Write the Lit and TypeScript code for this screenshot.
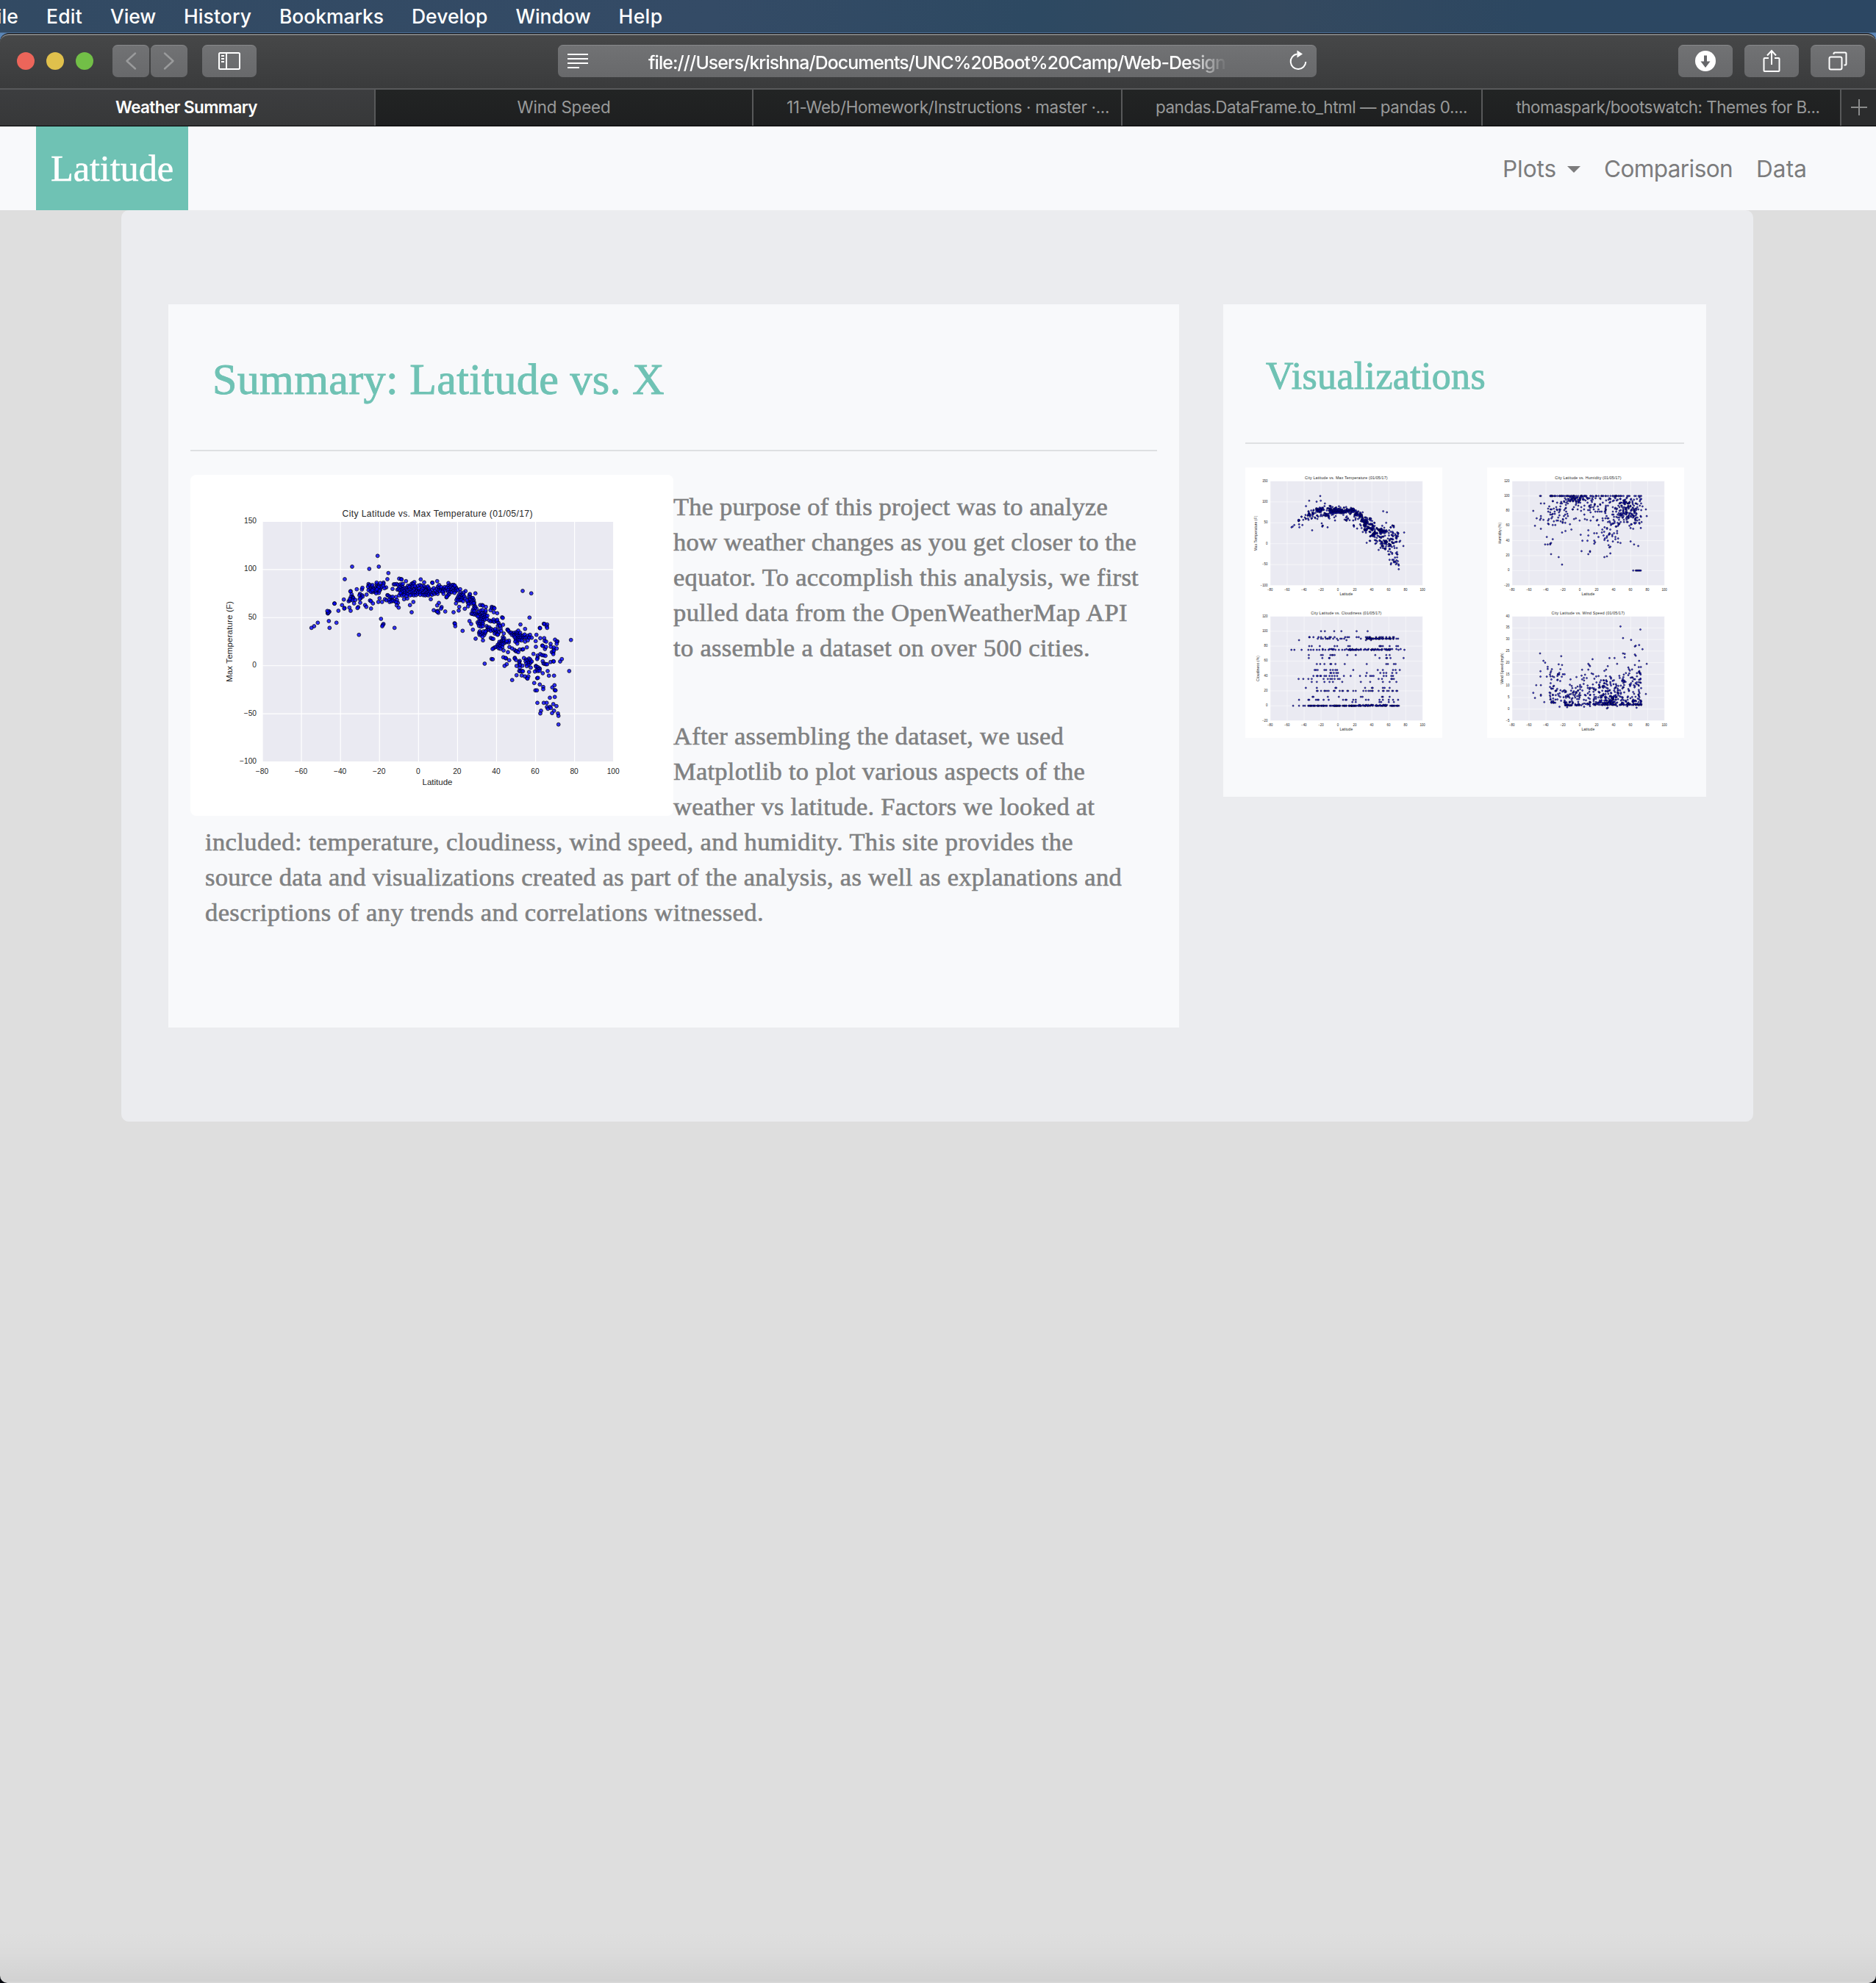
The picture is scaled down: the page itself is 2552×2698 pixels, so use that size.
import { LitElement, html, svg, css } from "lit";
import { customElement, property } from "lit/decorators.js";

/** One line of text whose tracking is adjusted so that it fills a given width. */
@customElement("fit-text")
class FitText extends LitElement {
  @property() text = "";
  @property({ type: Number }) w = 0;
  static styles = css`
    :host { display: inline-block; white-space: pre; flex: none; }
  `;
  render() {
    return html`<span>${this.text}</span>`;
  }
  updated() {
    const span = this.renderRoot.querySelector("span") as HTMLElement;
    span.style.letterSpacing = "0px";
    const natural = span.getBoundingClientRect().width;
    if (this.w && natural) span.style.letterSpacing = (this.w - natural) / this.text.length + "px";
  }
}

type Pt = [number, number];

/* Plot frame inside a figure, in figure units */
const FX = 98, FY = 63.3, FW = 477.7, FH = 327.4;

/* Latitude / temperature samples, in thirds of a figure unit */
const TEMP_RAW = `341,49 237,93 307,102 346,93 385,119 207,144 381,144 165,243 165,244 137,282 142,275 144,277 138,284 140,280 136,274 181,273 142,315 173,322 97,322 82,336 71,343 145,343 265,371 355,306 365,327 362,331 360,336 410,343
196,250 206,262 205,264 226,260 231,273 203,227 223,234 228,231 231,193 230,194 235,206 238,215 232,217 240,219 236,225 242,222 239,230 228,225 245,243 250,229 256,185 277,186 279,179 269,204 267,210 278,210 280,215 272,221 268,225 262,258 259,262 270,240 290,250 295,257 310,231 314,234 322,243 314,264 296,207
304,164 305,170 302,175 310,168 318,173 320,168 323,180 310,185 304,189 316,187 326,190 330,185 335,178 337,165 337,158 340,172 344,175 348,170 343,183 350,180 356,176 352,186 344,189 339,195 329,196 318,197 346,200 335,202 313,195 325,185 333,190 320,190 349,191 345,177 338,185
365,158 365,163 364,171 376,178 369,181 352,160 349,222 344,237 359,237 371,226 377,230 381,209 384,211 390,215 396,218 402,216 401,229 396,231 388,229 390,237 398,235 405,232 412,235 416,217 420,229 424,241 419,251 427,260 417,238 402,184 407,165 412,165 419,164 425,168 422,187
429,142 437,144 439,145 457,152 434,165 440,168 444,163 443,176 436,180 430,178 427,185 433,190 440,186 446,185 452,181 460,179 457,187 462,190 455,196 448,193 440,196 435,204 444,205 452,202 460,203 466,205 429,210 441,211 434,200 450,209 449,226 462,223 459,213 465,171
474,170 480,163 485,160 491,156 488,165 482,174 476,180 470,176 472,186 478,190 474,198 481,196 487,190 492,184 497,178 493,172 502,187 500,194 494,200 486,203 480,208 474,210 489,210 498,209 505,203 508,196 513,189 509,181 506,171 473,250 487,237 480,279
517,145 531,157 514,168 521,171 530,173 536,178 531,185 524,183 519,190 516,198 522,204 529,199 535,192 541,187 548,186 545,178 546,174 551,182 553,191 547,197 541,201 535,205 528,209 536,210 543,208 548,210 552,203 557,196 560,205 564,187 570,181 564,158 565,159 584,152 558,226 515,208
563,208 570,200 574,204 580,198 586,204 584,196 577,190 583,183 587,175 592,168 593,180 598,185 591,190 596,193 602,188 607,182 600,176 609,189 612,183 615,176 617,190 622,182 607,196 610,204 622,218
630,160 636,168 629,172 624,178 633,179 640,174 645,168 651,167 654,174 648,181 641,187 635,190 628,189 630,198 638,197 632,206 627,211 644,197 652,191 658,186 661,178 664,184 660,193 655,200 668,189 678,185 656,170 623,216
700,193 740,202 692,199 679,199 684,206 674,207 680,211 686,213 691,208 670,215 676,219 682,222 688,221 666,223 663,229 670,231 678,230 684,229 690,234 695,215 699,223 716,208 718,205 714,216 720,218 725,221 730,221 733,229 735,239 728,232 722,229 716,228 711,235 717,239 724,238 709,238 736,249 706,230 721,244 733,242 712,245 661,243 674,257 672,272 697,265 651,279 710,255
591,241 584,251 602,258 600,264 570,271 582,275 587,274 589,281 617,276 585,277 655,324 657,326 658,336 688,355
735,256 740,257 745,265 738,264 731,268 729,274 736,275 724,285 729,286 735,288 741,284 748,283 745,291 752,289 757,285 754,277 762,272 769,270 767,283 774,284 781,278 759,292 766,295 773,292 779,290 784,295 778,301 771,303 763,301 756,300 750,296 757,308 764,309 772,311 779,309 787,306 749,320 756,317 763,318 770,320 752,326 758,328 765,330 771,327 755,335 763,338 770,336 760,250 768,250 771,252 783,257 782,272 802,271 807,257 808,262 815,260 818,263 815,279 829,283 789,293 797,313 803,316 811,315 814,309 817,318 826,315 830,318 829,310 835,323 832,335 838,331 843,343 841,335 853,330 849,300 852,302
716,315 723,327 730,350 741,387 755,363 758,357 762,364 757,371 764,371 770,366 776,372 780,364 773,357 769,379 771,394 786,336 791,341 797,341 791,350 785,354 781,358 797,350 804,347 803,355 812,352 818,358 824,355 829,352 825,362 819,366 828,369 833,368 837,359 845,355 821,348 803,384 808,387 813,388 831,371
856,366 852,381 857,385 853,390 848,395 855,397 845,400 838,400 842,406 850,405 858,405 866,401 876,402 877,395 868,397 836,408 844,411 851,411 831,412 835,418 843,418 850,421 827,420 820,422 814,426 810,429 835,426 842,428 855,435 873,442
871,350 873,351 876,356 882,363 887,362 889,371 894,366 899,363 900,371 906,368 908,360 915,354 913,365 919,368 923,363 897,375 904,376 911,375 917,377 925,374 930,378 936,374 941,370 936,383 928,386 921,384 914,386 907,385 901,382 905,391 913,392 921,393 929,394 909,399 903,399 911,407 943,383 949,381 954,375 961,380 963,371 959,384 970,383 943,399 954,394 943,347 924,329 961,301 933,192 968,202
879,421 890,427 900,433 905,438 909,438 915,442 921,431 932,431 935,430 950,422 977,449 987,420 986,397 989,371
901,465 901,468 906,474 921,478 919,483 920,489 938,466 947,472 945,479 953,475 959,468 964,472 961,480 966,483 970,480 962,488 955,486 948,489 956,494 932,497 922,494 908,498 921,506 950,499 966,505 854,463 865,467 863,466 878,475 868,491 859,498 778,489 806,470 811,471 919,519 924,520 931,519 934,520 929,537 908,536 959,523 942,541 951,548 956,541 953,550 890,556
1005,385 1021,385 1023,396 1029,399 1013,415 1015,416 1024,429 1028,421 1047,408 1048,420 1060,429 1060,423 1065,391 1075,398 1072,399 1072,408 1072,427 1052,442 1058,443 1060,436 1058,450 1130,392 1003,343 1004,344 1019,326 1022,327 1033,329 1031,337 1033,343
994,456 1005,450 1012,454 1019,455 1026,457 994,465 992,470 1015,479 1018,488 1023,490 1028,491 1033,491 1047,482 1058,479 1060,480 1086,480 1093,470 1123,519
987,498 988,501 995,503 1001,508 1003,510 996,511 990,515 983,521 995,519 1002,518 1015,528 1035,519 1040,538 1061,538 992,548 995,547 980,568 1003,574 1017,584 1017,593 985,598 991,598 1054,586 1063,577 1064,597 1067,598 1044,628 1064,625 993,649 1019,649 1031,649 1058,654 1032,666 1036,673 1045,665 1048,670 1071,662 1061,681 1053,691 1008,681 1005,692 1077,692 1079,702 1079,737`;

const TEMP: Pt[] = TEMP_RAW.trim().split(/\s+/).map((p) => {
  const [x, y] = p.split(",").map(Number);
  return [141 + x / 3, 94 + y / 3] as Pt;
});

function rng(seed: number) {
  return () => {
    seed = (seed * 1664525 + 1013904223) >>> 0;
    return seed / 4294967296;
  };
}

function place(lat: number, v: number, lo: number, hi: number): Pt {
  return [FX + ((lat + 80) / 180) * FW, FY + FH - ((v - lo) / (hi - lo)) * FH];
}

function humidity(): Pt[] {
  const r = rng(11);
  const d: Pt[] = [[-55,80],[-53,60],[-51,70],[-46,100],[-47,100],[-46,90],[-42,90],[-47,68],[-46,73],[-46,70],[-43,68],[-46,56],[-39,45],[-41,35],[-38,35],[-35,36],[-34,37],[-35,35],[-32,42],[-34,22],[-25,18],[-21,8],[-32,61],[-29,61],[-21,51],[-17,53],[-10,55],[1,48],[3,40],[2,26],[10,22],[12,26],[12,25],[9,40],[10,54],[10,47],[17,50],[17,40],[18,38],[17,36],[20,50],[22,45],[29,18],[32,19],[35,31],[36,32],[36,23],[34,34],[33,40],[28,47],[29,41],[39,39],[42,42],[42,45],[44,50],[45,38],[48,37],[44,53],[60,39],[64,35],[69,33],[60,57],[63,56],[72,57],[78,82],[79,73],[74,86],[63,0],[66,0],[67,0],[68,0],[69,0],[70,0],[71,0],[72,0]];
  for (let i = 0; i < 82; i++) d.push([-38 + r() * 111, 100]);
  for (let i = 0; i < 40; i++) d.push([-20 + r() * 22, 92 + r() * 8]);
  for (let i = 0; i < 52; i++) d.push([-38 + r() * 22, 62 + r() * 31]);
  for (let i = 0; i < 64; i++) d.push([-15 + r() * 35, 60 + Math.sqrt(r()) * 39]);
  for (let i = 0; i < 150; i++) d.push([20 + r() * 53, 60 + r() * 38]);
  for (let i = 0; i < 75; i++) d.push([46 + r() * 21, 67 + r() * 27]);
  for (let i = 0; i < 24; i++) d.push([26 + r() * 20, 42 + r() * 25]);
  return d.map(([a, b]) => place(a, Math.round(b), -20, 120));
}

function cloudiness(): Pt[] {
  const r = rng(5);
  const d: Pt[] = [];
  const row = (v: number, lats: number[]) => lats.forEach((l) => d.push([l, v]));
  row(100, [-20, -15.5, -4.5, 4, 22, 35]);
  row(92, [-34, -33.5, -29, -23, -20, -15, -10, -8.5, -4, 8.5, 11, 13, 22, 24.5, 33, 35, 37, 38, 45, 49, 51, 53, 57, 61, 65, 66]);
  row(88, [-46, 0, 10, 33, 39]);
  row(80, [-34, -31, -21.5, -4, -1, 12, 14, 49, 50, 51, 53, 61, 69, 71]);
  row(75, [-55, -51.5, -43, -35, -32, -29, -25, -22, -18, -15, -11, -6, -3, 1, 5, 8, 71.5, 78.5]);
  row(76, [-18, -10, -8, -7, -5, 10, 14, 17, 22, 27, 32, 36, 41, 44, 47, 52, 55, 57, 60, 62, 64, 69, 74]);
  row(68, [-34.5, -20, -18, -9, -7, -6, -4, 11, 21, 44, 57, 61]);
  row(64, [-34.5, -18.5, -10.5, -10, 49, 57, 58, 62, 77.5]);
  row(56, [-25, -21, -16, -9, -8, -3, 8, 34, 57, 59, 66, 68]);
  row(48, [-27.5, -26, -24, -16, -14, -9, -6, -3, -1, 18, 47, 53, 65, 68, 73]);
  row(44, [-9, -8, -5, -2, 0, 34, 50, 54, 57, 64, 69]);
  row(40, [-29, -25, -24, -21, -20, -16, -14, -10, -7, -4, -1, 7, 15, 26, 33, 38, 40, 42, 54, 57, 63, 65]);
  row(36, [-46.5, -41, -35, -31, -17, -12, -9, -7, -4, 0, 2, 48, 52, 63, 64, 66]);
  row(32, [-31, -25, -16, -10, -6, 5, 27, 38, 53, 61, 69]);
  row(24, [-38, -25, -3, -2, 32, 40, 41, 53, 55, 61]);
  row(20, [-25, -24, -20, -16, -15, -13, -11, -5, -4, 2, 5, 6, 11, 12, 18, 21, 30, 33, 36, 38, 40, 41, 48, 53, 54, 58, 60, 64, 65, 69, 70]);
  row(12, [-30, -29, -12, 1, 27, 29, 52, 53, 61]);
  row(8, [-46, -35, -34, -26, -24, -23, -17, -11, 6, 9, 10, 18, 21, 33, 36, 49, 53, 60, 65, 71]);
  row(5, [17, 21, 49, 51, 60, 66]);
  row(0, [-53, -46, -41, -39, -35, -33, -28, -24, -20, -17, -13, -9]);
  for (let i = 0; i < 48; i++) row(90, [32 + r() * 34]);
  for (let i = 0; i < 12; i++) row(90, [-24 + r() * 40]);
  row(90, [71, 69, 27]);
  for (let i = 0; i < 38; i++) row(75, [10 + r() * 52]);
  for (let i = 0; i < 34; i++) row(0, [-40 + r() * 60]);
  for (let i = 0; i < 80; i++) row(0, [-5 + r() * 78]);
  for (let i = 0; i < 18; i++) row(1, [20 + r() * 40]);
  return d.map(([a, b]) => place(a, b, -20, 120));
}

function wind(): Pt[] {
  const r = rng(23);
  const d: Pt[] = [[48,35.6],[71.5,34.3],[51,30.6],[60.5,29.8],[70,27.6],[65,27],[66,27.3],[74,25.8],[-47,24],[51,24],[53,23.8],[53,22.3],[65,23.5],[66,23],[-22,22.8],[-43,20.8],[-41,20],[15,21.5],[35,22],[41,22],[70,20.8],[79,19.5],[78,6.5],[-55,7],[-53,4.8],[-51.5,10.3],[-46,10.3],[-46,6.2],[-46,5.8],[-46.5,14],[-46.5,16.3],[-38,18.2],[-38,17.3],[-25,19.3],[-21,19],[-33,17.2],[-23,17.2],[10,19.5],[11,19],[12,18.5],[33,18.5],[44,19.5],[31,17],[10,17],[29,16.5],[65,19],[58,17.2],[-42,3],[-34,16.3],[-39,14],[-20,15],[-18,15],[-11,12.8],[-4,13.8]];
  const low = (lo: number, hi: number, n: number, base: number, spread: number) => {
    for (let i = 0; i < n; i++) d.push([lo + r() * (hi - lo), base + Math.pow(r(), 2) * spread]);
  };
  low(-36, -18, 58, 2.7, 14);
  low(-18, 2, 85, 1.6, 9);
  low(2, 18, 42, 2, 15);
  low(16, 45, 165, 1.8, 12.5);
  low(45, 73, 160, 1.8, 16.5);
  low(26, 45, 40, 2.5, 3.5);
  [[-24,1],[-15,0.8],[32,0.3],[33,0.6],[67,0.6],[5,1],[12,1.3],[56,1.2],[44,1.3]].forEach((p) => d.push(p as Pt));
  return d.map(([a, b]) => place(a, b, -5, 40));
}

interface PlotSpec { title: string; tw: number; label: string; lw: number; lx: number; lo: number; hi: number; step: number; pts: Pt[]; }

const PLOTS: Record<string, PlotSpec> = {
  temp: { title: "City Latitude vs. Max Temperature (01/05/17)", tw: 259, label: "Max Temperature (F)", lw: 110, lx: 57, lo: -100, hi: 150, step: 50, pts: TEMP },
  humidity: { title: "City Latitude vs. Humidity (01/05/17)", tw: 208, label: "Humidity (%)", lw: 68, lx: 63.5, lo: -20, hi: 120, step: 20, pts: humidity() },
  cloud: { title: "City Latitude vs. Cloudiness (01/05/17)", tw: 221, label: "Cloudiness (%)", lw: 80, lx: 63.5, lo: -20, hi: 120, step: 20, pts: cloudiness() },
  wind: { title: "City Latitude vs. Wind Speed (01/05/17)", tw: 229, label: "Wind Speed (mph)", lw: 98, lx: 69.5, lo: -5, hi: 40, step: 5, pts: wind() },
};

@customElement("scatter-plot")
class ScatterPlot extends LitElement {
  @property() kind = "temp";
  @property() box = "0 0 657 464";
  @property({ type: Boolean, reflect: true }) small = false;
  static styles = css`
    :host { display: block; background: #fff; overflow: hidden; }
    svg { display: block; width: 100%; height: 100%; font-family: "Liberation Sans", Arial, sans-serif; fill: #262626; }
    .area { fill: #eaeaf2; }
    .grid { stroke: #fff; stroke-width: 1.2; }
    .dot { fill: #0000ff; fill-opacity: 0.8; stroke: #000; stroke-opacity: 0.8; stroke-width: 0.9; }
    :host([small]) .dot { stroke-width: 1.5; stroke-opacity: 0.75; }
    .tick { font-size: 10.2px; }
    .title { font-size: 12.2px; }
    .label { font-size: 11.5px; }
  `;
  render() {
    const p = PLOTS[this.kind];
    const xs: number[] = [], ys: number[] = [];
    for (let x = -80; x <= 100; x += 20) xs.push(x);
    for (let y = p.lo; y <= p.hi; y += p.step) ys.push(y);
    const fmt = (n: number) => String(n).replace("-", "−");
    const cx = FX + FW / 2, cy = FY + FH / 2;
    return html`<svg viewBox=${this.box} preserveAspectRatio="none">
      <rect class="area" x=${FX} y=${FY} width=${FW} height=${FH}></rect>
      ${xs.map((v) => {
        const [x] = place(v, 0, 0, 1);
        return svg`<line class="grid" x1=${x} x2=${x} y1=${FY} y2=${FY + FH}></line>
          <text class="tick" x=${x - 0.5} y=${FY + FH + 16} text-anchor="middle">${fmt(v)}</text>`;
      })}
      ${ys.map((v) => {
        const [, y] = place(0, v, p.lo, p.hi);
        return svg`<line class="grid" x1=${FX} x2=${FX + FW} y1=${y} y2=${y}></line>
          <text class="tick" x=${FX - 8} y=${y + 2.6} text-anchor="end">${fmt(v)}</text>`;
      })}
      ${p.pts.map(([x, y]) => svg`<circle class="dot" cx=${x.toFixed(1)} cy=${y.toFixed(1)} r="2.45"></circle>`)}
      <text class="title" x=${cx - p.tw / 2 - 0.8} y=${FY - 6} textLength=${p.tw}>${p.title}</text>
      <text class="label" x=${cx - 0.8} y=${FY + FH + 31.5} text-anchor="middle">Latitude</text>
      <text class="label" x=${-p.lw / 2} y="0" textLength=${p.lw} transform="translate(${p.lx} ${cy}) rotate(-90)">${p.label}</text>
    </svg>`;
  }
}

@customElement("browser-chrome")
class BrowserChrome extends LitElement {
  static styles = css`
    :host { display: block; font-family: Inter, "Liberation Sans", sans-serif; color: #fff; background: #5b86b8; }
    .menubar { height: 45px; box-sizing: border-box; border-bottom: 1px solid #4d6f96; display: flex; gap: 38px; padding-top: 6px;
      background: linear-gradient(90deg, #324a63 0%, #344b66 38%, #2d4962 55%, #34495f 68%, #2c4761 82%, #2c4763 100%);
      font-size: 26.5px; line-height: 32px; font-weight: 500; overflow: hidden; }
    .menubar fit-text:first-child { margin-left: -20px; }
    .window { border-top: 1px solid #0b0e14; border-radius: 12px 12px 0 0; overflow: hidden; background: #3c3d3e; }
    .toolbar { height: 76px; box-sizing: border-box; border-top: 2px solid #7c7d7e; border-bottom: 2px solid #58595b;
      background: linear-gradient(#464748, #3a3b3c); display: flex; align-items: center; padding: 0 15px 2px 23px; border-radius: 12px 12px 0 0; }
    .light { width: 24px; height: 24px; border-radius: 50%; margin-right: 16px; }
    .red { background: #ec655a; } .yellow { background: #e0c04c; } .green { background: #72bf47; margin-right: 26px; }
    .btn { height: 44px; box-sizing: border-box; border-radius: 7px; border-top: 1px solid #88898b; background: linear-gradient(#717274, #68696b); display: flex; align-items: center; justify-content: center; }
    .btn svg { display: block; fill: none; stroke: #fff; stroke-width: 2; margin-top: -1px; }
    .arrow { width: 50px; margin-right: 2px; }
    .btn.arrow svg { stroke: #9a9b9c; stroke-width: 2.4; stroke-linecap: round; stroke-linejoin: round; }
    .wide { width: 74px; }
    .side { margin-left: 18px; }
    .address { width: 1032px; margin-left: 410px; margin-right: auto; justify-content: flex-start; padding: 0 12px 0 13px; }
    .url { font-size: 24.8px; font-weight: 500; line-height: 30px; margin-left: 82px; margin-right: auto; padding-top: 3px;
      -webkit-mask-image: linear-gradient(90deg, #000 93.5%, rgba(0,0,0,0.05)); mask-image: linear-gradient(90deg, #000 93.5%, rgba(0,0,0,0.05)); }
    .actions { display: flex; gap: 16px; }
    .tabs { display: grid; grid-template-columns: 509px 514px 502px 490px 488px 1fr; height: 50px; box-sizing: border-box; border-bottom: 1px solid #000; }
    .tab { display: flex; align-items: center; justify-content: center; background: linear-gradient(#222424, #1e1f20); color: #999a9a; border-left: 2px solid #58595a;
      box-sizing: border-box; font-size: 22.4px; line-height: 28px; padding-bottom: 1px; }
    .active { background: linear-gradient(#3c3d3f, #373839); color: #fff; font-weight: 600; border-left: 0; padding-right: 2px; }
    .o3 { padding-left: 29px; } .o4 { padding-left: 26px; } .o5 { padding-left: 18px; }
    .plus { background: #2b2c2d; }
    .plus svg { fill: none; stroke: #8a8b8b; stroke-width: 2; }
  `;
  render() {
    const menu: [string, number][] = [["File", 45], ["Edit", 49], ["View", 62], ["History", 92], ["Bookmarks", 142], ["Develop", 103.5], ["Window", 102], ["Help", 60]];
    return html`
      <div class="menubar">${menu.map(([t, w]) => html`<fit-text .text=${t} .w=${w}></fit-text>`)}</div>
      <div class="window">
        <div class="toolbar">
          <div class="light red"></div><div class="light yellow"></div><div class="light green"></div>
          <div class="btn arrow"><svg width="16" height="26"><path d="M14 2.5 2.5 13 14 23.5"></path></svg></div>
          <div class="btn arrow"><svg width="16" height="26"><path d="M2 2.5 13.5 13 2 23.5"></path></svg></div>
          <div class="btn wide side">
            <svg width="30" height="24"><rect x="1" y="1" width="28" height="22" rx="1.5"></rect><path d="M11 1v22M4 5h4M4 9h4M4 13h4"></path></svg>
          </div>
          <div class="btn address">
            <svg width="28" height="22"><path d="M0 2h28M0 8h28M0 14h28M0 20h16"></path></svg>
            <fit-text class="url" .text=${"file:///Users/krishna/Documents/UNC%20Boot%20Camp/Web-Design"} .w=${785}></fit-text>
            <svg width="26" height="30" viewBox="0 0 26 30"><path d="M11.5 5.5A10.3 10.3 0 1 0 23.3 16"></path><path d="M11.5 0.5v10l7.5-5z" fill="#fff" stroke="none"></path></svg>
          </div>
          <div class="actions">
            <div class="btn wide"><svg width="28" height="28"><circle cx="14" cy="14" r="14" fill="#fff" stroke="none"></circle><path d="M12 6.5h4v8h4.5L14 23 7.5 14.5h4.5z" fill="#66676a" stroke="none"></path></svg></div>
            <div class="btn wide"><svg width="24" height="32" viewBox="0 0 24 32"><path d="M8 12H2.5a1 1 0 0 0-1 1v16a1 1 0 0 0 1 1h19a1 1 0 0 0 1-1V13a1 1 0 0 0-1-1H16M12 21V2M6 8.5 12 2l6 6.5"></path></svg></div>
            <div class="btn wide"><svg width="26" height="26"><rect x="1.5" y="7.5" width="17" height="17" rx="2"></rect><path d="M7.5 4V3a1.5 1.5 0 0 1 1.5-1.5h14a1.5 1.5 0 0 1 1.5 1.5v14a1.5 1.5 0 0 1-1.5 1.5h-1.5"></path></svg></div>
          </div>
        </div>
        <div class="tabs">
          <div class="tab active"><fit-text .text=${"Weather Summary"} .w=${193}></fit-text></div>
          <div class="tab"><fit-text .text=${"Wind Speed"} .w=${127}></fit-text></div>
          <div class="tab o3"><fit-text .text=${"11-Web/Homework/Instructions · master ·..."} .w=${439}></fit-text></div>
          <div class="tab o4"><fit-text .text=${"pandas.DataFrame.to_html — pandas 0...."} .w=${424}></fit-text></div>
          <div class="tab o5"><fit-text .text=${"thomaspark/bootswatch: Themes for B..."} .w=${413}></fit-text></div>
          <div class="tab plus"><svg width="22" height="22"><path d="M0 11h22M11 0v22"></path></svg></div>
        </div>
      </div>`;
  }
}

@customElement("app-root")
class AppRoot extends LitElement {
  static styles = css`
    :host { display: block; background: #05070c; }
    .page { height: 2526px; box-sizing: border-box; border-radius: 0 0 10px 10px; overflow: hidden;
      background: linear-gradient(rgba(0,0,0,0) calc(100% - 70px), rgba(0,0,0,0.015) calc(100% - 40px), rgba(0,0,0,0.055) calc(100% - 3px), rgba(0,0,0,0.02)) #dedede; }
    .navbar { height: 114px; background: #f8f9fb; display: flex; align-items: stretch; padding: 0 94px 0 49px; }
    .brand { width: 207px; background: #6fc2b4; color: #fff; font: 50.5px/60px "Liberation Serif", "Times New Roman", serif; display: flex; justify-content: center; padding-top: 27px; box-sizing: border-box; -webkit-text-stroke: 0.5px #fff; }
    .links { margin-left: auto; display: flex; font: 31.5px/40px Inter, "Liberation Sans", sans-serif; color: #7c7c7d; padding-top: 38px; }
    .links .caret { width: 0; height: 0; border: 9px solid transparent; border-top-color: #7c7c7d; border-bottom: 0; margin: 16px 32px 0 15px; }
    .links .comp { margin-right: 32px; }
    .jumbo { margin: 0 167px 0 165px; height: 1240px; box-sizing: border-box; border-radius: 10px; background: #ebecef; padding: 128px 64px; display: flex; justify-content: space-between; align-items: flex-start; }
    .card { background: #f8f9fb; box-sizing: border-box; padding: 0 30px; font-family: "Liberation Serif", Georgia, serif; }
    .summary { width: 1375px; height: 984px; }
    .visual { width: 657px; height: 670px; }
    h1, h2 { margin: 0; font-weight: 400; color: #6fc2b4; border-bottom: 2px solid #dee0e2; box-sizing: border-box; -webkit-text-stroke: 0.9px #6fc2b4; }
    h1 { height: 200px; padding: 67px 0 0 30px; font-size: 60px; line-height: 70px; }
    h2 { height: 190px; padding: 68px 0 0 28px; font-size: 52px; line-height: 60px; }
    .text { padding-top: 32px; }
    .body { padding: 18.5px 0 0 20px; }
    .figure { float: left; width: 657px; height: 464px; border-radius: 8px; margin: -18.5px 0 0 -20px; }
    p { margin: 0 0 72px; font-size: 34.5px; line-height: 48px; color: #808182; -webkit-text-stroke: 0.6px #808182; white-space: nowrap; }
    .thumbs { display: grid; grid-template-columns: 268px 268px; justify-content: space-between; padding-top: 32px; }
    .thumb { height: 184px; }
  `;
  render() {
    const line = (t: string, w: number) => html`<fit-text .text=${t} .w=${w}></fit-text><br>`;
    const thumb = "19.7 20.7 617.5 424";
    return html`
      <browser-chrome></browser-chrome>
      <div class="page">
        <nav class="navbar">
          <div class="brand"><fit-text .text=${"Latitude"} .w=${167}></fit-text></div>
          <div class="links">
            <fit-text .text=${"Plots"} .w=${73}></fit-text><span class="caret"></span>
            <fit-text class="comp" .text=${"Comparison"} .w=${175}></fit-text>
            <fit-text .text=${"Data"} .w=${69}></fit-text>
          </div>
        </nav>
        <main class="jumbo">
          <section class="card summary">
            <h1><fit-text .text=${"Summary: Latitude vs. X"} .w=${615}></fit-text></h1>
            <div class="text"><div class="body">
              <scatter-plot class="figure" kind="temp"></scatter-plot>
              <p>${line("The purpose of this project was to analyze", 591)}${line("how weather changes as you get closer to the", 630)}${line("equator. To accomplish this analysis, we first", 633)}${line("pulled data from the OpenWeatherMap API", 618)}${line("to assemble a dataset on over 500 cities.", 567)}</p>
              <p>${line("After assembling the dataset, we used", 531)}${line("Matplotlib to plot various aspects of the", 560)}${line("weather vs latitude. Factors we looked at", 573)}${line("included: temperature, cloudiness, wind speed, and humidity. This site provides the", 1181)}${line("source data and visualizations created as part of the analysis, as well as explanations and", 1247)}${line("descriptions of any trends and correlations witnessed.", 760)}</p>
            </div></div>
          </section>
          <section class="card visual">
            <h2><fit-text .text=${"Visualizations"} .w=${299}></fit-text></h2>
            <div class="thumbs">
              <scatter-plot small class="thumb" kind="temp" box=${thumb}></scatter-plot>
              <scatter-plot small class="thumb" kind="humidity" box=${thumb}></scatter-plot>
              <scatter-plot small class="thumb" kind="cloud" box=${thumb}></scatter-plot>
              <scatter-plot small class="thumb" kind="wind" box=${thumb}></scatter-plot>
            </div>
          </section>
        </main>
      </div>`;
  }
}
